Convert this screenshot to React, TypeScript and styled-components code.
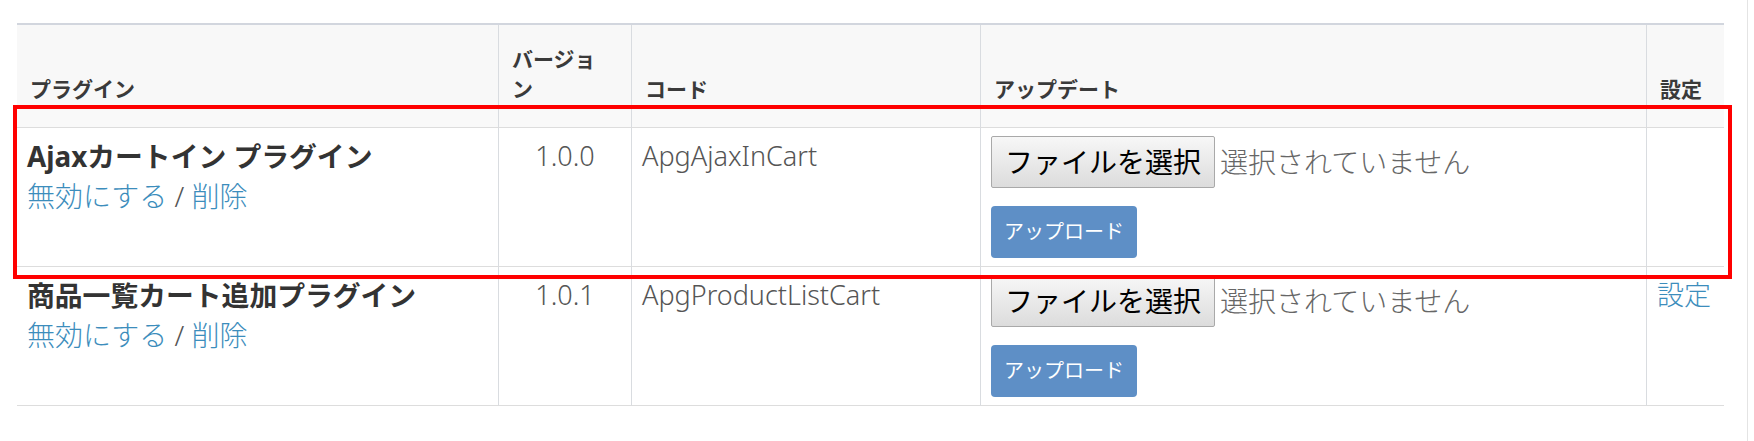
import React from "react";
import styled, { createGlobalStyle } from "styled-components";

const GlobalStyle = createGlobalStyle`
  html, body { margin: 0; padding: 0; background: #fff; }
  body { font-family: "Noto Sans", "Noto Sans CJK JP", sans-serif; }
`;

const Page = styled.div`
  position: relative;
  box-sizing: border-box;
  width: 1748px;
  height: 441px;
  padding: 23px 0 0 17px;
  border-right: 1px solid #e4e4e4;
  overflow: hidden;
`;

const Table = styled.table`
  width: 1707px;
  table-layout: fixed;
  border-collapse: separate;
  border-spacing: 0;
  border-top: 2px solid #d2d6de;
`;

const HeadRow = styled.tr`
  height: 83px;
`;

const HeadCell = styled.th<{ $w: number; $pr: number }>`
  box-sizing: border-box;
  width: ${(p) => p.$w}px;
  padding: 0 ${(p) => p.$pr}px 3px 13px;
  vertical-align: bottom;
  text-align: left;
  font-size: 21px;
  line-height: 30px;
  font-weight: 700;
  color: #3a3a3a;
  background: #f8f8f8;
  border-bottom: 1px solid #dddddd;
  & + & {
    border-left: 1px solid #d9dce0;
  }
`;

const SpacerRow = styled.tr`
  height: 20px;
`;

const SpacerCell = styled.td`
  padding: 0;
  background: #f9f9f9;
  border-bottom: 1px solid #dddddd;
  & + & {
    border-left: 1px solid #d9dce0;
  }
`;

const Cell = styled.td<{ $align?: "left" | "center" }>`
  box-sizing: border-box;
  padding: 8px 10px;
  vertical-align: top;
  text-align: ${(p) => p.$align ?? "left"};
  font-size: 27px;
  font-weight: 300;
  line-height: 40px;
  color: #555;
  background: #fff;
  border-bottom: 1px solid #dddddd;
  & + & {
    border-left: 1px solid #d9dce0;
  }
`;

const PluginName = styled.div`
  font-size: 27.8px;
  line-height: 40px;
  font-weight: 700;
  color: #333;
  white-space: nowrap;
`;

const Actions = styled.div`
  font-size: 28px;
  line-height: 40px;
  color: #555;
`;

const Link = styled.a`
  color: #3c8dbc;
  text-decoration: none;
`;

const UpdateBox = styled.div`
  display: flex;
  flex-direction: column;
  align-items: flex-start;
  gap: 18px;
`;

const FileRow = styled.div`
  display: flex;
  align-items: center;
  gap: 5px;
  height: 52px;
`;

const FileButton = styled.button`
  box-sizing: border-box;
  width: 224px;
  height: 52px;
  padding: 0;
  border: 1px solid #a9a9a9;
  border-radius: 2px;
  background: linear-gradient(#f7f7f7, #dcdcdc);
  font-family: inherit;
  font-size: 28px;
  font-weight: 400;
  line-height: 1;
  color: #000;
`;

const NoFile = styled.span`
  font-size: 28px;
  color: #666;
  white-space: nowrap;
`;

const UploadButton = styled.button`
  box-sizing: border-box;
  height: 52px;
  padding: 0 13px;
  border: none;
  border-radius: 4px;
  background: #5e8fc6;
  color: #fff;
  font-family: inherit;
  font-size: 20px;
  font-weight: 400;
  line-height: 1;
`;

const Highlight = styled.div`
  position: absolute;
  left: 13px;
  top: 105px;
  width: 1719px;
  height: 174px;
  box-sizing: border-box;
  border: 4px solid #ff0000;
  pointer-events: none;
`;

type Plugin = {
  name: string;
  version: string;
  code: string;
  hasSettings: boolean;
};

const plugins: Plugin[] = [
  { name: "Ajaxカートイン プラグイン", version: "1.0.0", code: "ApgAjaxInCart", hasSettings: false },
  { name: "商品一覧カート追加プラグイン", version: "1.0.1", code: "ApgProductListCart", hasSettings: true },
];

const columns = [
  { title: "プラグイン", width: 481, padRight: 24 },
  { title: "バージョン", width: 133, padRight: 24 },
  { title: "コード", width: 349, padRight: 24 },
  { title: "アップデート", width: 666, padRight: 24 },
  { title: "設定", width: 78, padRight: 4 },
];

export default function App() {
  return (
    <>
      <GlobalStyle />
      <Page>
        <Table>
          <thead>
            <HeadRow>
              {columns.map((c) => (
                <HeadCell key={c.title} $w={c.width} $pr={c.padRight}>
                  {c.title}
                </HeadCell>
              ))}
            </HeadRow>
          </thead>
          <tbody>
            <SpacerRow>
              {columns.map((c) => (
                <SpacerCell key={c.title} />
              ))}
            </SpacerRow>
            {plugins.map((p) => (
              <tr key={p.code}>
                <Cell>
                  <PluginName>{p.name}</PluginName>
                  <Actions>
                    <Link href="#">無効にする</Link> / <Link href="#">削除</Link>
                  </Actions>
                </Cell>
                <Cell $align="center">{p.version}</Cell>
                <Cell>{p.code}</Cell>
                <Cell>
                  <UpdateBox>
                    <FileRow>
                      <FileButton type="button">ファイルを選択</FileButton>
                      <NoFile>選択されていません</NoFile>
                    </FileRow>
                    <UploadButton type="button">アップロード</UploadButton>
                  </UpdateBox>
                </Cell>
                <Cell>{p.hasSettings && <Link href="#">設定</Link>}</Cell>
              </tr>
            ))}
          </tbody>
        </Table>
        <Highlight />
      </Page>
    </>
  );
}
